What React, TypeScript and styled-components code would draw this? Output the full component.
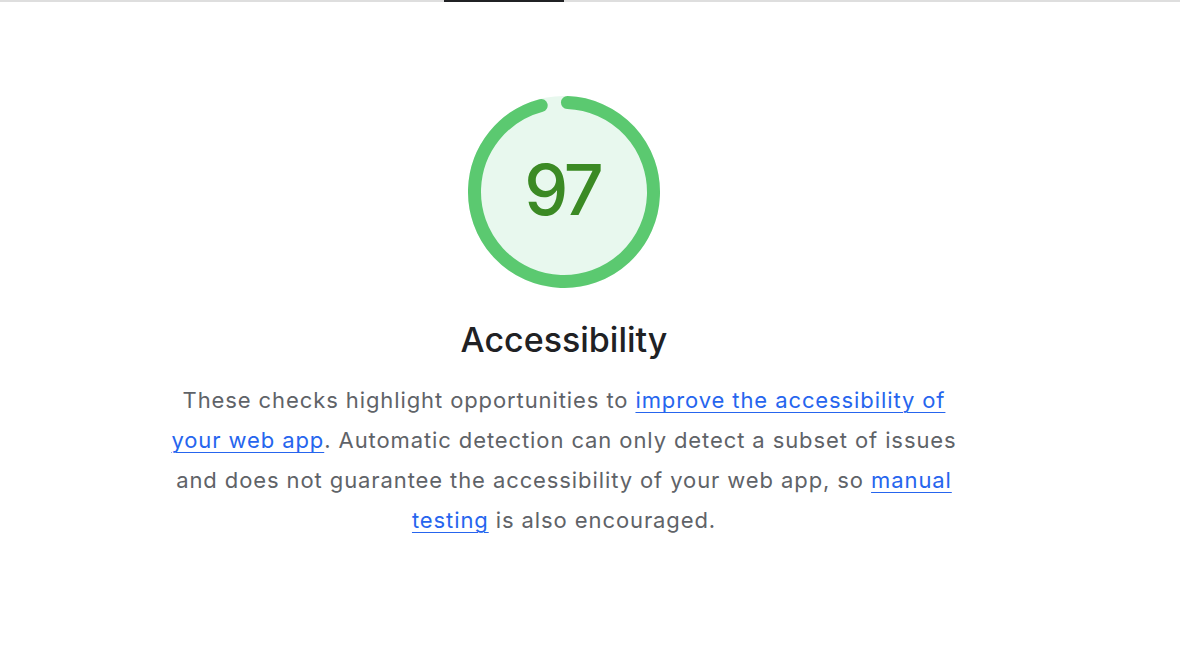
import React from 'react';
import styled, { createGlobalStyle } from 'styled-components';

const GlobalStyle = createGlobalStyle`
  html, body {
    margin: 0;
    padding: 0;
    background: #ffffff;
  }
  body {
    font-family: Inter, "Noto Sans", "Liberation Sans", sans-serif;
  }
`;

const TabStrip = styled.div`
  height: 2px;
  background: #dedede;
  display: flex;
`;

const TabIndicator = styled.div<{ $left: number; $width: number }>`
  margin-left: ${p => p.$left}px;
  width: ${p => p.$width}px;
  height: 2px;
  background: #202124;
`;

const Main = styled.main`
  width: 1128px;
  display: flex;
  flex-direction: column;
  align-items: center;
  padding-top: 94px;
`;

const GaugeWrap = styled.div`
  position: relative;
  width: 192px;
  height: 192px;
`;

const GaugeValue = styled.div`
  position: absolute;
  inset: 0;
  display: flex;
  align-items: center;
  justify-content: center;
  font-size: 70px;
  font-weight: 500;
  line-height: 1;
  color: #3b8a24;
  padding-bottom: 4px;
  letter-spacing: -3px;
  text-indent: -3px;
`;

const Title = styled.h2`
  margin: 32px 0 0;
  font-size: 34px;
  line-height: 40px;
  font-weight: 500;
  color: #202124;
`;

const Description = styled.p`
  margin: 20px 0 0;
  max-width: 800px;
  text-align: center;
  font-size: 22px;
  letter-spacing: 0.9px;
  line-height: 40px;
  color: #5f6368;
`;

const Link = styled.a`
  color: #2665ee;
  text-decoration: underline;
  text-underline-offset: 4px;
  text-decoration-thickness: 1px;
`;

interface GaugeProps {
  score: number;
}

const Gauge = ({ score }: GaugeProps) => {
  const size = 192;
  const stroke = 13;
  const r = (size - stroke) / 2;
  const circ = 2 * Math.PI * r;
  // leave room for the round caps so the gap stays visible
  const startDeg = 2.2;
  const sweep = (score / 100) * 360 - 4.6 - startDeg;
  const len = (sweep / 360) * circ;

  return (
    <GaugeWrap>
      <svg width={size} height={size} viewBox={`0 0 ${size} ${size}`}>
        <circle cx={size / 2} cy={size / 2} r={size / 2} fill="#e8f8ee" />
        <circle
          cx={size / 2}
          cy={size / 2}
          r={r}
          fill="none"
          stroke="#5bc970"
          strokeWidth={stroke}
          strokeLinecap="round"
          strokeDasharray={`${len} ${circ}`}
          transform={`rotate(${-90 + startDeg} ${size / 2} ${size / 2})`}
        />
      </svg>
      <GaugeValue>{score}</GaugeValue>
    </GaugeWrap>
  );
};

const App = () => (
  <>
    <GlobalStyle />
    <TabStrip>
      <TabIndicator $left={444} $width={120} />
    </TabStrip>
    <Main>
      <Gauge score={97} />
      <Title>Accessibility</Title>
      <Description>
        These checks highlight opportunities to{' '}
        <Link href="#">improve the accessibility of your web app</Link>. Automatic detection can
        only detect a subset of issues and does not guarantee the accessibility of your web app,
        so <Link href="#">manual testing</Link> is also encouraged.
      </Description>
    </Main>
  </>
);

export default App;
